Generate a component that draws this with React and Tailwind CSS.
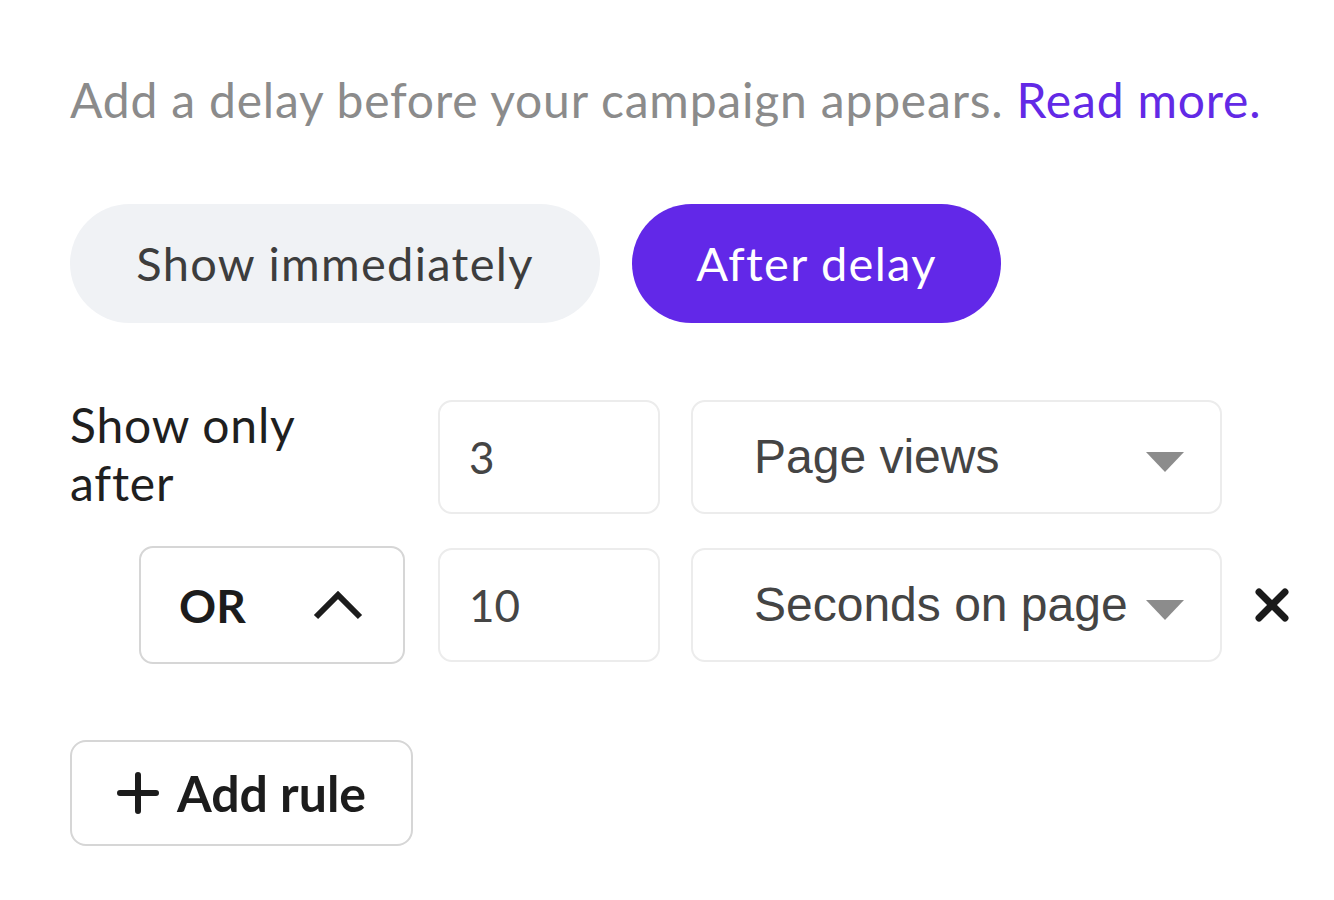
import { X } from "lucide-react";

function Caret() {
  return (
    <svg width="38" height="20" viewBox="0 0 38 20" className="shrink-0 mt-[10px]">
      <polygon points="0,0 38,0 19,20" fill="#8c8c8c" />
    </svg>
  );
}

function Select({ label }) {
  return (
    <div className="w-[531px] h-[114px] border-2 border-[#ececec] rounded-[14px] flex items-center pl-[61px] pr-[36px] justify-between">
      <span className="text-[48px] text-[#444444]" style={{ fontFamily: '"Liberation Sans", Arial, sans-serif' }}>
        {label}
      </span>
      <Caret />
    </div>
  );
}

function NumberInput({ value }) {
  return (
    <div className="w-[222px] h-[114px] border-2 border-[#ececec] rounded-[14px] flex items-center pl-[29px] text-[44px] text-[#454545]">
      {value}
    </div>
  );
}

export default function App() {
  return (
    <div className="min-h-screen bg-white pl-[70px] pt-[70px]" style={{ fontFamily: 'Lato, "Noto Sans", sans-serif' }}>
      {/* Intro */}
      <p className="text-[48px] leading-[60px] text-[#8b8b8b] tracking-[0.8px] whitespace-nowrap">
        Add a delay before your campaign appears. <a className="text-[#6229e6]">Read more.</a>
      </p>

      {/* Mode toggle */}
      <div className="mt-[74px] flex gap-[32px]">
        <button className="h-[119px] w-[530px] rounded-full bg-[#f0f2f5] text-[47px] tracking-[1.3px] text-[#3d3d3d]">
          Show immediately
        </button>
        <button className="h-[119px] w-[369px] rounded-full bg-[#6228e8] text-[47px] tracking-[1.3px] text-white">
          After delay
        </button>
      </div>

      {/* Rules */}
      <div className="mt-[77px] flex flex-col gap-[32px]">
        <div className="flex items-start h-[114px]">
          <div className="w-[368px] text-[48px] leading-[58px] tracking-[0.8px] text-[#1f1f1f] -mt-[4px]">
            Show only
            <br />
            after
          </div>
          <NumberInput value="3" />
          <div className="ml-[31px]">
            <Select label="Page views" />
          </div>
        </div>

        <div className="flex items-center">
          <div className="w-[368px] pl-[69px]">
            <div className="w-[266px] h-[118px] border-2 border-[#d6d6d6] rounded-[14px] flex items-center justify-between pl-[38px] pr-[40px]">
              <span className="text-[46px] font-bold text-[#1c1c1c]">OR</span>
              <svg width="50" height="30" viewBox="0 0 50 30">
                <polyline points="3,27 25,5 47,27" fill="none" stroke="#1c1c1c" strokeWidth="6" />
              </svg>
            </div>
          </div>
          <NumberInput value="10" />
          <div className="ml-[31px]">
            <Select label="Seconds on page" />
          </div>
          <X className="ml-[24px] text-[#1a1a1a]" size={52} strokeWidth={3.2} />
        </div>
      </div>

      {/* Add rule */}
      <button className="mt-[76px] w-[343px] h-[106px] border-2 border-[#d6d6d6] rounded-[16px] flex items-center justify-center gap-[18px] text-[50px] font-bold text-[#1c1c1c]">
        <svg width="42" height="42" viewBox="0 0 42 42">
          <path d="M21 3v36M3 21h36" stroke="#1c1c1c" strokeWidth="6" strokeLinecap="round" />
        </svg>
        Add rule
      </button>
    </div>
  );
}
